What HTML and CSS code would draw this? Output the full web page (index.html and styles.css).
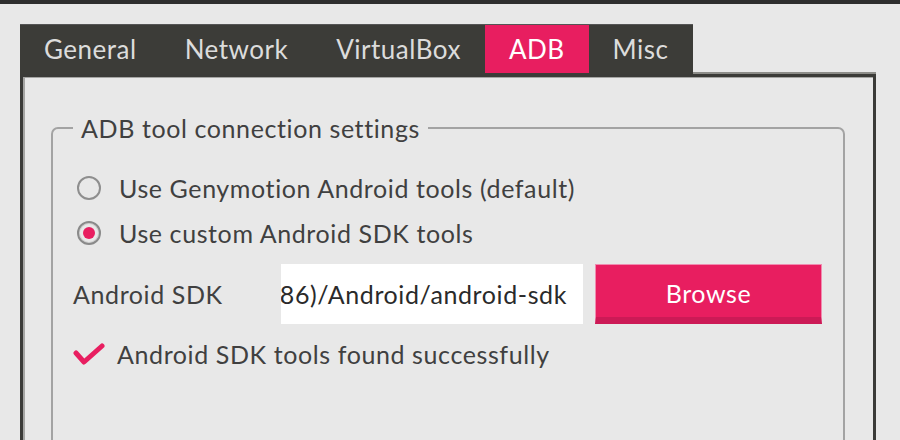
FILE: index.html
```html
<!DOCTYPE html>
<html>
<head>
<meta charset="utf-8">
<link rel="stylesheet" href="styles.css">
</head>
<body>
<div class="topbar"></div>
<div class="dialog">
  <div class="tabs">
    <div class="tab">General</div>
    <div class="tab">Network</div>
    <div class="tab">VirtualBox</div>
    <div class="tab active">ADB</div>
    <div class="tab">Misc</div>
  </div>
  <div class="panel">
    <fieldset class="group">
      <legend class="group-title">ADB tool connection settings</legend>
      <div class="options">
        <div class="option"><span class="radio"></span><span>Use Genymotion Android tools (default)</span></div>
        <div class="option"><span class="radio checked"></span><span>Use custom Android SDK tools</span></div>
      </div>
      <div class="sdk-row">
        <span class="sdk-label">Android SDK</span>
        <div class="sdk-input"><span class="sdk-path">86)/Android/android-sdk</span></div>
        <div class="browse">Browse</div>
      </div>
      <div class="status">
        <svg class="check" width="32" height="26" viewBox="0 0 32 26"><polyline points="3,12 11,21 29,5" fill="none" stroke="#e81e60" stroke-width="5" stroke-linecap="round" stroke-linejoin="round"/></svg>
        <span>Android SDK tools found successfully</span>
      </div>
    </fieldset>
  </div>
</div>
</body>
</html>
```
FILE: styles.css
```css
html, body {
  margin: 0;
  padding: 0;
  height: 100%;
  overflow: hidden;
}
body {
  background: #e8e8e8;
  font-family: Lato, "Open Sans", sans-serif;
  color: #404040;
  font-size: 25px;
  letter-spacing: 0.6px;
}
.topbar {
  height: 4px;
  background: #2e2e2e;
}
.dialog {
  padding: 20px 24px 0 20px;
}
.tabs {
  display: inline-flex;
  background: #3c3c38;
  height: 50px;
  border-top: 1px solid #555;
  box-sizing: border-box;
  padding-right: 1px;
}
.tab {
  height: 48px;
  padding: 0 24px;
  display: flex;
  align-items: center;
  color: #dcdcdc;
  font-size: 26px;
  letter-spacing: 0.5px;
}
.tab.active {
  background: #e81e60;
  color: #fff;
}
.panel {
  border: 3px solid #3b3b38;
  border-bottom: none;
  box-shadow: inset 2px 1px 0 #a5a5a3, 0 -2px 0 #8d8d89;
  height: 366px;
  overflow: hidden;
  padding: 36px 28px 0 28px;
  box-sizing: border-box;
}
.group {
  margin: 0;
  border: 2px solid #a3a3a3;
  border-radius: 7px;
  padding: 0 0 0 20px;
  height: 360px;
  box-sizing: border-box;
}
.group-title {
  padding: 0 8px;
  margin-left: 0;
  font-size: 25px;
  line-height: 30px;
  color: #404040;
}
.options {
  display: flex;
  flex-direction: column;
  padding-top: 22px;
}
.option {
  height: 45px;
  display: flex;
  align-items: center;
  gap: 18px;
  padding-left: 4px;
}
.radio {
  width: 20px;
  height: 20px;
  border: 2px solid #8e8e8e;
  border-radius: 50%;
  display: flex;
  align-items: center;
  justify-content: center;
  flex: none;
}
.radio.checked {
  border-color: #8a8a8a;
  box-shadow: inset 0 0 0 1px #cfcfcf;
}
.radio.checked::after {
  content: "";
  width: 12px;
  height: 12px;
  border-radius: 50%;
  background: #e81e60;
}
.sdk-row {
  display: flex;
  align-items: center;
  margin-top: 9px;
  height: 60px;
}
.sdk-label {
  width: 208px;
  flex: none;
}
.sdk-input {
  width: 302px;
  height: 60px;
  background: #fff;
  display: flex;
  align-items: center;
  justify-content: flex-end;
  overflow: hidden;
  white-space: nowrap;
  padding-right: 16px;
  box-sizing: border-box;
  color: #2a2a2a;
  flex: none;
}
.browse {
  margin-left: 12px;
  width: 227px;
  height: 60px;
  box-sizing: border-box;
  background: #e81e60;
  border: 1px solid #f08cb0;
  border-bottom: 7px solid #cc1a56;
  color: #fff;
  display: flex;
  align-items: center;
  justify-content: center;
  padding-top: 4px;
  font-size: 25px;
}
.status {
  display: flex;
  align-items: center;
  gap: 12px;
  margin-top: 15px;
  height: 30px;
}
.check {
  flex: none;
}
```
